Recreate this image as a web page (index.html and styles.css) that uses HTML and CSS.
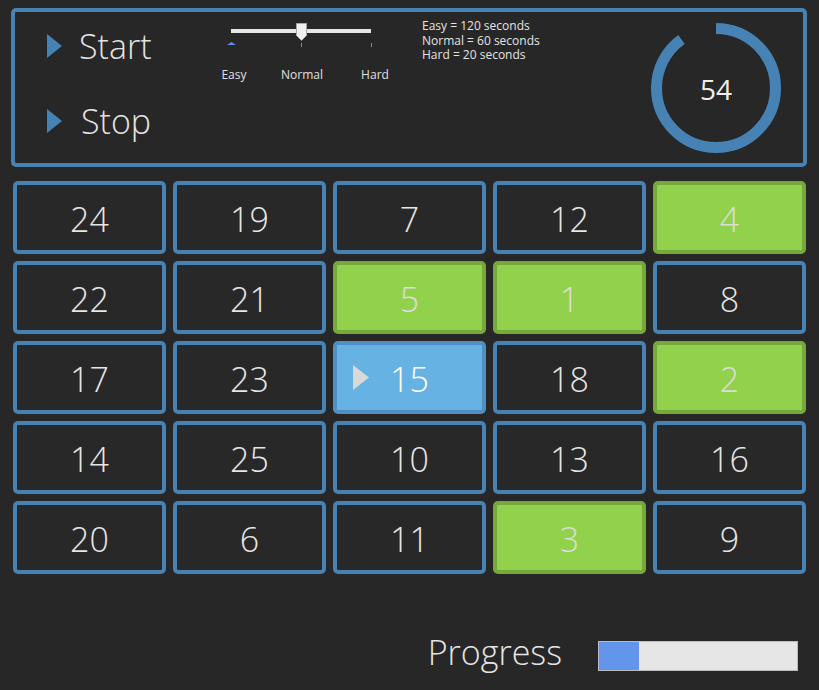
FILE: index.html
```html
<!DOCTYPE html>
<html lang="en">
<head>
<meta charset="utf-8">
<title>Number Game</title>
<link rel="stylesheet" href="styles.css">
</head>
<body>
  <section class="panel">
    <div class="modes">
      <div class="mode-btn">
        <svg class="mode-tri" width="15" height="24" viewBox="0 0 15 24"><polygon points="0,0 15,12 0,24"/></svg>
        <span class="mode-text">Start</span>
      </div>
      <div class="mode-btn mode-stop">
        <svg class="mode-tri" width="15" height="24" viewBox="0 0 15 24"><polygon points="0,0 15,12 0,24"/></svg>
        <span class="mode-text">Stop</span>
      </div>
    </div>

    <div class="slider">
      <svg class="slider-graphic" width="152" height="24" viewBox="0 0 152 24">
        <rect x="5" y="6" width="140" height="4" fill="#e6e6e6"/>
        <polygon points="1,22 5.5,19 10,22" fill="#5b8fe8"/>
        <rect x="75" y="20" width="1" height="4" fill="#5b8fe8"/>
        <rect x="145" y="20" width="1" height="4" fill="#5b8fe8"/>
        <path d="M70.5 0.5 H80.5 V12.5 L75.5 17.5 L70.5 12.5 Z" fill="#f0f0f0" stroke="#a8a8a8" stroke-width="1"/>
      </svg>
      <div class="slider-labels">
        <span>Easy</span>
        <span>Normal</span>
        <span>Hard</span>
      </div>
    </div>

    <div class="info">
      <div>Easy = 120 seconds</div>
      <div>Normal = 60 seconds</div>
      <div>Hard = 20 seconds</div>
    </div>

    <div class="timer">
      <svg class="timer-ring" width="130" height="130" viewBox="0 0 130 130">
        <circle cx="65" cy="65" r="59.5" fill="none" stroke="#4682b4" stroke-width="11"
          stroke-dasharray="336.5 400" transform="rotate(-90 65 65)"/>
      </svg>
      <span class="timer-value">54</span>
    </div>
  </section>

  <section class="grid">
    <div class="cell">24</div>
    <div class="cell">19</div>
    <div class="cell">7</div>
    <div class="cell">12</div>
    <div class="cell done">4</div>

    <div class="cell">22</div>
    <div class="cell">21</div>
    <div class="cell done">5</div>
    <div class="cell done">1</div>
    <div class="cell">8</div>

    <div class="cell">17</div>
    <div class="cell">23</div>
    <div class="cell current">
      <svg class="cell-marker" width="16" height="25" viewBox="0 0 16 25"><polygon points="0,0 16,12.5 0,25"/></svg>
      15
    </div>
    <div class="cell">18</div>
    <div class="cell done">2</div>

    <div class="cell">14</div>
    <div class="cell">25</div>
    <div class="cell">10</div>
    <div class="cell">13</div>
    <div class="cell">16</div>

    <div class="cell">20</div>
    <div class="cell">6</div>
    <div class="cell">11</div>
    <div class="cell done">3</div>
    <div class="cell">9</div>
  </section>

  <section class="progress">
    <span class="progress-label">Progress</span>
    <div class="progress-bar"><div class="progress-fill" style="width: 20%"></div></div>
  </section>
</body>
</html>
```

FILE: styles.css
```css
html, body {
  margin: 0;
  background: #272727;
}

body {
  width: 819px;
  height: 690px;
  overflow: hidden;
  box-sizing: border-box;
  padding: 8px 12px 0 11px;
  font-family: "Open Sans", "Noto Sans", sans-serif;
  color: #e8e8e8;
}

/* ---------- top panel ---------- */
.panel {
  box-sizing: border-box;
  width: 796px;
  height: 159px;
  border: 4px solid #4682b4;
  border-radius: 5px;
  display: flex;
  align-items: flex-start;
}

.modes {
  box-sizing: border-box;
  width: 195px;
  padding: 14px 0 0 32px;
  display: flex;
  flex-direction: column;
  gap: 35px;
}

.mode-btn {
  display: flex;
  align-items: center;
  height: 40px;
  gap: 17px;
}

.mode-stop {
  gap: 19px;
}

.mode-tri {
  fill: #4682b4;
  flex: none;
}

.mode-text {
  font-size: 34px;
  font-weight: 300;
  line-height: 40px;
  color: #e4e4e4;
}

.slider {
  width: 212px;
  margin-top: 11px;
}

.slider-graphic {
  display: block;
  margin-left: 16px;
}

.slider-labels {
  display: flex;
  margin-top: 20px;
  font-size: 12px;
  line-height: 16px;
  color: #e0e0e0;
}

.slider-labels span {
  width: 48px;
  text-align: center;
}

.slider-labels span:nth-child(2) {
  margin-left: 20px;
}

.slider-labels span:nth-child(3) {
  margin-left: 25px;
}

.info {
  margin-top: 7px;
  font-size: 12px;
  line-height: 14.5px;
  color: #e4e4e4;
}

.timer {
  margin-left: auto;
  margin-right: 22px;
  align-self: center;
  display: grid;
  place-items: center;
}

.timer-ring,
.timer-value {
  grid-area: 1 / 1;
}

.timer-ring {
  display: block;
}

.timer-value {
  font-size: 28px;
  line-height: 1;
  padding-top: 3px;
  color: #eeeeee;
}

/* ---------- number grid ---------- */
.grid {
  margin: 14px 0 0 2px;
  display: grid;
  grid-template-columns: repeat(5, 153px);
  grid-auto-rows: 73px;
  gap: 7px;
}

.cell {
  position: relative;
  box-sizing: border-box;
  border: 4px solid #4682b4;
  border-radius: 5px;
  background: #282828;
  display: flex;
  align-items: center;
  justify-content: center;
  padding-top: 3px;
  font-size: 34px;
  font-weight: 300;
  color: #e6e6e6;
}

.cell.done {
  background: #92d14b;
  border-color: #76a83b;
  color: #dcdcdc;
}

.cell.current {
  background: #66b3e3;
  border-color: #4f8fc3;
  color: #ffffff;
}

.cell-marker {
  position: absolute;
  left: 16px;
  top: 20px;
  fill: #d9d9d9;
}

/* ---------- progress ---------- */
.progress {
  margin: 67px 9px 0 0;
  display: flex;
  justify-content: flex-end;
  align-items: flex-start;
  gap: 36px;
}

.progress-label {
  font-size: 34px;
  font-weight: 300;
  line-height: 30px;
  margin-top: -4px;
  color: #e4e4e4;
}

.progress-bar {
  box-sizing: border-box;
  width: 200px;
  height: 30px;
  border: 1px solid #bcbcbc;
  background: #e6e6e6;
}

.progress-fill {
  height: 100%;
  background: #6495ed;
}
```
